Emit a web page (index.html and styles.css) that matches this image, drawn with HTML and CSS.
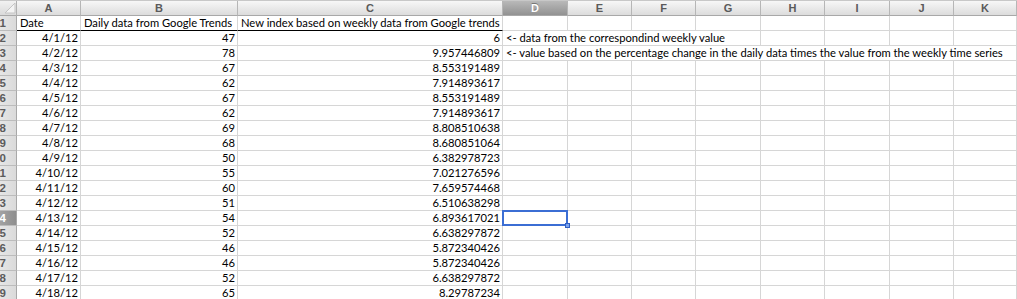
FILE: index.html
```html
<!DOCTYPE html>
<html lang="en">
<head>
    <meta charset="UTF-8">
    <title>Google Trends - daily index</title>
    <link rel="stylesheet" href="styles.css">
</head>
<body>
    <div class="sheet">
        <div class="row col-head">
            <div class="corner">
                <svg width="17" height="16" viewBox="0 0 17 16"><polygon points="15,3 15,13 5,13" fill="#f4f4f4" stroke="#c4c4c4" stroke-width="1"/></svg>
            </div>
            <div class="ch">A</div><div class="ch">B</div><div class="ch">C</div>
            <div class="ch selected">D</div><div class="ch">E</div><div class="ch">F</div>
            <div class="ch">G</div><div class="ch">H</div><div class="ch">I</div>
            <div class="ch">J</div><div class="ch">K</div>
        </div>

        <div class="row title-row">
            <div class="rh">1</div>
            <div class="c">Date</div>
            <div class="c">Daily data from Google Trends</div>
            <div class="c">New index based on weekly data from Google trends</div>
            <div class="c"></div><div class="c"></div><div class="c"></div><div class="c"></div>
            <div class="c"></div><div class="c"></div><div class="c"></div><div class="c"></div>
        </div>

        <div class="row">
            <div class="rh">2</div>
            <div class="c num">4/1/12</div><div class="c num">47</div><div class="c num">6</div>
            <div class="c note span4">&lt;- data from the correspondind weekly value</div>
            <div class="c"></div><div class="c"></div><div class="c"></div><div class="c"></div>
        </div>
        <div class="row">
            <div class="rh">3</div>
            <div class="c num">4/2/12</div><div class="c num">78</div><div class="c num">9.957446809</div>
            <div class="c note span8">&lt;- value based on the percentage change in the daily data times the value from the weekly time series</div>
        </div>
        <div class="row">
            <div class="rh">4</div>
            <div class="c num">4/3/12</div><div class="c num">67</div><div class="c num">8.553191489</div>
            <div class="c"></div><div class="c"></div><div class="c"></div><div class="c"></div><div class="c"></div><div class="c"></div><div class="c"></div><div class="c"></div>
        </div>
        <div class="row">
            <div class="rh">5</div>
            <div class="c num">4/4/12</div><div class="c num">62</div><div class="c num">7.914893617</div>
            <div class="c"></div><div class="c"></div><div class="c"></div><div class="c"></div><div class="c"></div><div class="c"></div><div class="c"></div><div class="c"></div>
        </div>
        <div class="row">
            <div class="rh">6</div>
            <div class="c num">4/5/12</div><div class="c num">67</div><div class="c num">8.553191489</div>
            <div class="c"></div><div class="c"></div><div class="c"></div><div class="c"></div><div class="c"></div><div class="c"></div><div class="c"></div><div class="c"></div>
        </div>
        <div class="row">
            <div class="rh">7</div>
            <div class="c num">4/6/12</div><div class="c num">62</div><div class="c num">7.914893617</div>
            <div class="c"></div><div class="c"></div><div class="c"></div><div class="c"></div><div class="c"></div><div class="c"></div><div class="c"></div><div class="c"></div>
        </div>
        <div class="row">
            <div class="rh">8</div>
            <div class="c num">4/7/12</div><div class="c num">69</div><div class="c num">8.808510638</div>
            <div class="c"></div><div class="c"></div><div class="c"></div><div class="c"></div><div class="c"></div><div class="c"></div><div class="c"></div><div class="c"></div>
        </div>
        <div class="row">
            <div class="rh">9</div>
            <div class="c num">4/8/12</div><div class="c num">68</div><div class="c num">8.680851064</div>
            <div class="c"></div><div class="c"></div><div class="c"></div><div class="c"></div><div class="c"></div><div class="c"></div><div class="c"></div><div class="c"></div>
        </div>
        <div class="row">
            <div class="rh">10</div>
            <div class="c num">4/9/12</div><div class="c num">50</div><div class="c num">6.382978723</div>
            <div class="c"></div><div class="c"></div><div class="c"></div><div class="c"></div><div class="c"></div><div class="c"></div><div class="c"></div><div class="c"></div>
        </div>
        <div class="row">
            <div class="rh">11</div>
            <div class="c num">4/10/12</div><div class="c num">55</div><div class="c num">7.021276596</div>
            <div class="c"></div><div class="c"></div><div class="c"></div><div class="c"></div><div class="c"></div><div class="c"></div><div class="c"></div><div class="c"></div>
        </div>
        <div class="row">
            <div class="rh">12</div>
            <div class="c num">4/11/12</div><div class="c num">60</div><div class="c num">7.659574468</div>
            <div class="c"></div><div class="c"></div><div class="c"></div><div class="c"></div><div class="c"></div><div class="c"></div><div class="c"></div><div class="c"></div>
        </div>
        <div class="row">
            <div class="rh">13</div>
            <div class="c num">4/12/12</div><div class="c num">51</div><div class="c num">6.510638298</div>
            <div class="c"></div><div class="c"></div><div class="c"></div><div class="c"></div><div class="c"></div><div class="c"></div><div class="c"></div><div class="c"></div>
        </div>
        <div class="row">
            <div class="rh selected">14</div>
            <div class="c num">4/13/12</div><div class="c num">54</div><div class="c num">6.893617021</div>
            <div class="c active"><span class="handle"></span></div>
            <div class="c"></div><div class="c"></div><div class="c"></div><div class="c"></div><div class="c"></div><div class="c"></div><div class="c"></div>
        </div>
        <div class="row">
            <div class="rh">15</div>
            <div class="c num">4/14/12</div><div class="c num">52</div><div class="c num">6.638297872</div>
            <div class="c"></div><div class="c"></div><div class="c"></div><div class="c"></div><div class="c"></div><div class="c"></div><div class="c"></div><div class="c"></div>
        </div>
        <div class="row">
            <div class="rh">16</div>
            <div class="c num">4/15/12</div><div class="c num">46</div><div class="c num">5.872340426</div>
            <div class="c"></div><div class="c"></div><div class="c"></div><div class="c"></div><div class="c"></div><div class="c"></div><div class="c"></div><div class="c"></div>
        </div>
        <div class="row">
            <div class="rh">17</div>
            <div class="c num">4/16/12</div><div class="c num">46</div><div class="c num">5.872340426</div>
            <div class="c"></div><div class="c"></div><div class="c"></div><div class="c"></div><div class="c"></div><div class="c"></div><div class="c"></div><div class="c"></div>
        </div>
        <div class="row">
            <div class="rh">18</div>
            <div class="c num">4/17/12</div><div class="c num">52</div><div class="c num">6.638297872</div>
            <div class="c"></div><div class="c"></div><div class="c"></div><div class="c"></div><div class="c"></div><div class="c"></div><div class="c"></div><div class="c"></div>
        </div>
        <div class="row">
            <div class="rh">19</div>
            <div class="c num">4/18/12</div><div class="c num">65</div><div class="c num">8.29787234</div>
            <div class="c"></div><div class="c"></div><div class="c"></div><div class="c"></div><div class="c"></div><div class="c"></div><div class="c"></div><div class="c"></div>
        </div>
    </div>
</body>
</html>
```

FILE: styles.css
```css
* {
    margin: 0;
    padding: 0;
    box-sizing: border-box;
}

body {
    background: white;
    font-family: Lato, "Liberation Sans", sans-serif;
    font-size: 11.2px;
    color: #000;
    overflow: hidden;
}

.sheet {
    width: 1017px;
}

.row {
    display: grid;
    grid-template-columns: 17px 64px 157px 265px 65px 64px 64px 65px 64px 65px 64px 1fr;
    height: 15px;
}

/* column letters */
.col-head {
    height: 16px;
    border-top: 1px solid #c8c8c8;
}

.corner {
    background: linear-gradient(#f2f2f2, #dadada);
    border-right: 1px solid #b0b0b0;
    border-bottom: 1px solid #a8a8a8;
    overflow: hidden;
}

.corner svg {
    display: block;
    margin-top: -1px;
}

.ch {
    background: linear-gradient(#f7f7f7, #dcdcdc);
    border-right: 1px solid #b6b6b6;
    border-bottom: 1px solid #a8a8a8;
    font-family: "Liberation Sans", sans-serif;
    font-weight: bold;
    font-size: 11px;
    color: #5a5a5a;
    text-align: center;
    line-height: 14px;
}

.ch.selected {
    background: linear-gradient(#b9b9b9, #929292);
    color: #fff;
    text-shadow: 0 -1px 0 #777;
}

/* row numbers, scrolled so only the last digit shows */
.rh {
    display: flex;
    justify-content: flex-end;
    align-items: center;
    padding-right: 10px;
    overflow: hidden;
    white-space: nowrap;
    background: linear-gradient(90deg, #e6e6e6, #dadada);
    border-right: 1px solid #a8a8a8;
    border-bottom: 1px solid #bcbcbc;
    font-family: "Liberation Sans", sans-serif;
    font-weight: bold;
    font-size: 11.5px;
    color: #5c5c5c;
}

.rh.selected {
    background: linear-gradient(90deg, #a2a2a2, #8e8e8e);
    color: #fff;
}

/* cells */
.c {
    border-right: 1px solid #d6d6d6;
    border-bottom: 1px solid #d6d6d6;
    padding: 0 2px 0 3px;
    line-height: 14px;
    white-space: nowrap;
    overflow: hidden;
}

.c.num {
    text-align: right;
}

.title-row .c:nth-child(-n+4) {
    border-bottom-color: #000;
}

.note {
    padding-left: 3px;
}

.span4 {
    grid-column: span 4;
}

.span8 {
    grid-column: span 8;
}

.active {
    position: relative;
    overflow: visible;
}

.active::after {
    content: "";
    position: absolute;
    top: -1px;
    left: -1px;
    right: -1px;
    bottom: -1px;
    border: 2px solid #3b6ed4;
}

.handle {
    position: absolute;
    right: -3px;
    bottom: -3px;
    width: 5px;
    height: 5px;
    background: #7aa2ec;
    border: 1px solid #2f5fc4;
    z-index: 1;
}
```
